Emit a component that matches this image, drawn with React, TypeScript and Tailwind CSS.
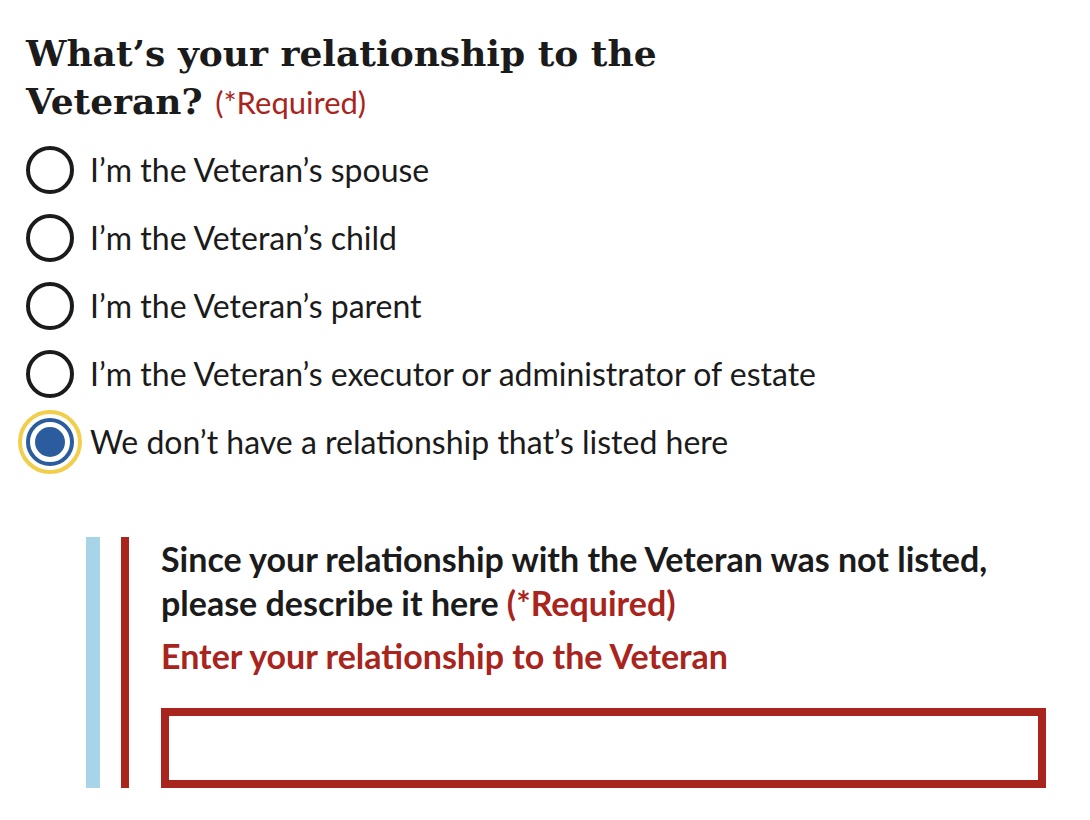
import { useState } from 'react';

const options = [
  'I’m the Veteran’s spouse',
  'I’m the Veteran’s child',
  'I’m the Veteran’s parent',
  'I’m the Veteran’s executor or administrator of estate',
  'We don’t have a relationship that’s listed here',
];

const sans = "font-['Lato','Liberation_Sans',sans-serif]";

const RadioDot = ({ checked }: { checked: boolean }) => {
  if (!checked) {
    return <span className="block w-[48px] h-[48px] rounded-full border-[4px] border-[#1b1b1b] bg-white" />;
  }
  return (
    <span className="flex items-center justify-center w-[64px] h-[64px] -m-[8px] rounded-full border-[4px] border-[#f1ce4b]">
      <span className="flex items-center justify-center w-[48px] h-[48px] rounded-full border-[4px] border-[#2b5c9e] bg-white">
        <span className="block w-[30px] h-[30px] rounded-full bg-[#2b5c9e]" />
      </span>
    </span>
  );
};

export default function App() {
  const [selected, setSelected] = useState(4);
  const [value, setValue] = useState('');

  return (
    <div className="min-h-screen bg-white pl-[26px] pr-[44px] pt-[29px] text-[#1b1b1b]">
      {/* Question */}
      <h1 className="font-['DejaVu_Serif',serif] font-bold text-[36px] leading-[48px]">
        What’s your relationship to the
        <br />
        Veteran?{' '}
        <span className={`${sans} font-normal text-[31px] text-[#a8241c]`}>(*Required)</span>
      </h1>

      {/* Options */}
      <div className="mt-[10px]">
        {options.map((label, i) => (
          <label
            key={label}
            className="flex items-center h-[68px] cursor-pointer"
            onClick={() => setSelected(i)}
          >
            <span className="w-[48px] h-[48px] flex items-center justify-center shrink-0">
              <RadioDot checked={selected === i} />
            </span>
            <span className={`${sans} ml-[16px] text-[32px]`}>{label}</span>
          </label>
        ))}
      </div>

      {/* Follow-up */}
      {selected === 4 && (
        <div className="flex ml-[60px] mt-[61px]">
          <div className="w-[14px] bg-[#a7d4e7] shrink-0" />
          <div className="ml-[21px] w-[8px] bg-[#a8241c] shrink-0" />
          <div className={`${sans} flex-1 pl-[32px]`}>
            <p className="font-bold text-[34px] leading-[44px]">
              Since your relationship with the Veteran was not listed,
              <br />
              please describe it here{' '}
              <span className="text-[#a8241c]">(*Required)</span>
            </p>
            <p className="mt-[9px] font-bold text-[34px] leading-[44px] text-[#a8241c]">
              Enter your relationship to the Veteran
            </p>
            <input
              value={value}
              onChange={(e) => setValue(e.target.value)}
              className="mt-[30px] block w-full h-[80px] border-[8px] border-[#a8241c] outline-none px-3 text-[32px]"
            />
          </div>
        </div>
      )}
    </div>
  );
}
